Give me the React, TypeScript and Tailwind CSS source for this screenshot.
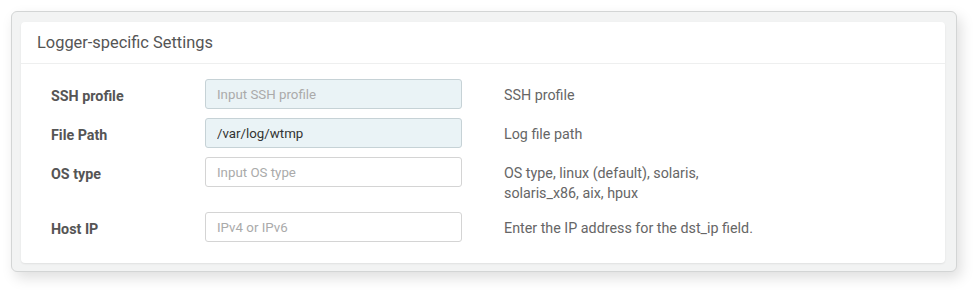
const fields = [
  { label: 'SSH profile', placeholder: 'Input SSH profile', value: '', readOnly: true, help: 'SSH profile' },
  { label: 'File Path', placeholder: '', value: '/var/log/wtmp', readOnly: true, help: 'Log file path' },
  { label: 'OS type', placeholder: 'Input OS type', value: '', readOnly: false, help: 'OS type, linux (default), solaris, solaris_x86, aix, hpux' },
  { label: 'Host IP', placeholder: 'IPv4 or IPv6', value: '', readOnly: false, help: 'Enter the IP address for the dst_ip field.' },
];

export default function App() {
  return (
    <div className="min-h-screen bg-white pt-[11px] pl-[11px] font-['Roboto',sans-serif]">
      <div className="w-[946px] rounded-[6px] border border-[#d3d5d5] bg-[#f2f3f3] pt-[10px] pb-[8px] pl-[9px] pr-[11px] shadow-[4px_6px_14px_rgba(0,0,0,0.13)]">
        <div className="rounded-[4px] bg-white shadow-[0_1px_2px_rgba(0,0,0,0.08)]">
          <div className="h-[42px] border-b border-[#eeefef] pl-[16px] pt-[11px] text-[16.4px] leading-[20px] text-[#555]">
            Logger-specific Settings
          </div>
          <div className="pl-[30px] pt-[15px] pb-[12px]">
            {fields.map((f) => (
              <div key={f.label} className="mb-[9px] flex items-start">
                <label className="w-[154px] pt-[7px] text-[14.3px] font-bold leading-[20px] text-[#555]">
                  {f.label}
                </label>
                <input
                  readOnly
                  defaultValue={f.value}
                  placeholder={f.placeholder}
                  className={`h-[30px] w-[257px] rounded-[3px] border px-[11px] text-[13.3px] text-[#333] outline-none placeholder:text-[#aaa] ${
                    f.readOnly ? 'border-[#c6d2d6] bg-[#eaf3f6]' : 'border-[#d4d4d4] bg-white'
                  }`}
                />
                <p className="ml-[42px] w-[262px] pt-[6px] text-[14.3px] leading-[20px] text-[#666]">
                  {f.help}
                </p>
              </div>
            ))}
          </div>
        </div>
      </div>
    </div>
  );
}
